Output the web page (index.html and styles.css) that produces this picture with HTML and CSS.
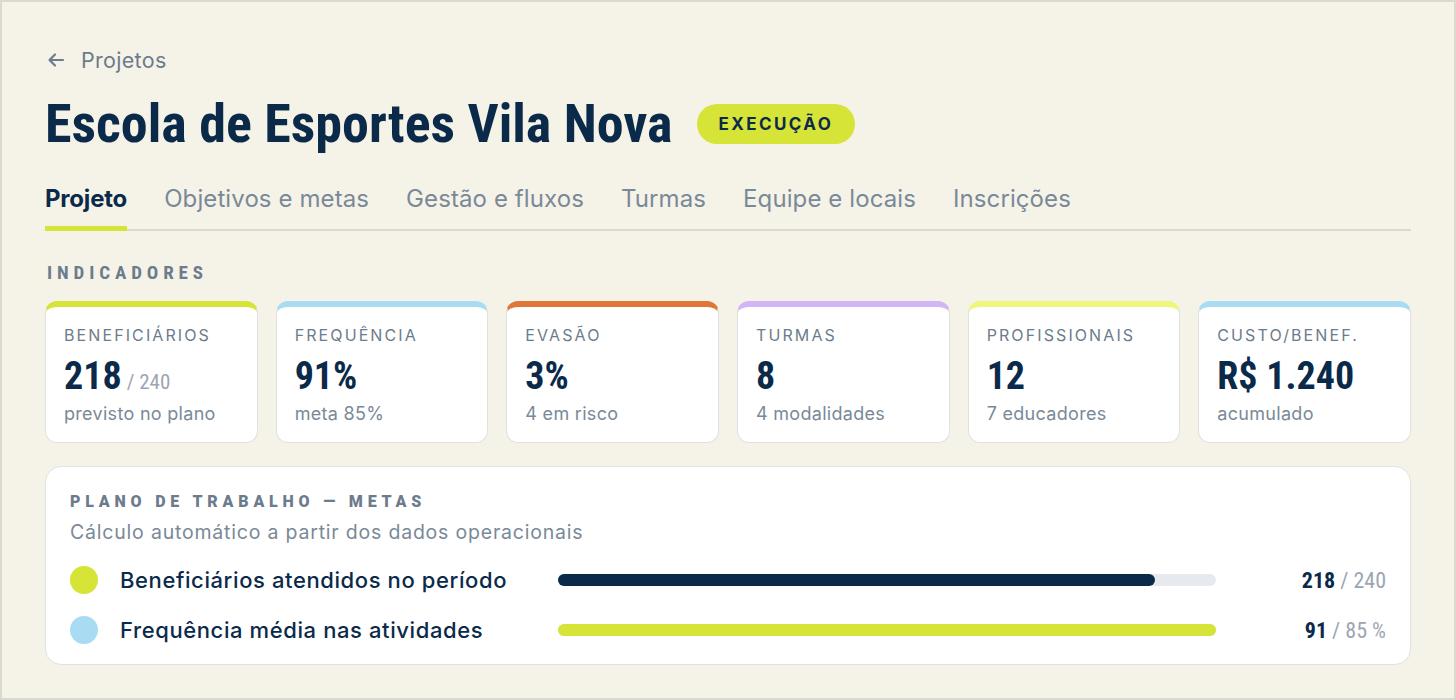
FILE: index.html
```html
<!DOCTYPE html>
<html lang="pt-BR">
<head>
    <meta charset="UTF-8">
    <meta name="viewport" content="width=device-width, initial-scale=1.0">
    <title>Escola de Esportes Vila Nova</title>
    <link rel="stylesheet" href="styles.css">
</head>
<body>
    <div class="page">
        <a class="back" href="#">
            <svg class="back-icon" viewBox="0 0 20 20" width="20" height="20" aria-hidden="true">
                <path d="M17 10H3.5M9 4.5 3.5 10 9 15.5" fill="none" stroke="currentColor" stroke-width="2.2" stroke-linecap="round" stroke-linejoin="round"/>
            </svg>
            <span>Projetos</span>
        </a>

        <div class="title-row">
            <h1>Escola de Esportes Vila Nova</h1>
            <span class="badge">EXECUÇÃO</span>
        </div>

        <nav class="tabs">
            <a class="tab active" href="#">Projeto</a>
            <a class="tab" href="#">Objetivos e metas</a>
            <a class="tab" href="#">Gestão e fluxos</a>
            <a class="tab" href="#">Turmas</a>
            <a class="tab" href="#">Equipe e locais</a>
            <a class="tab" href="#">Inscrições</a>
        </nav>

        <h2 class="section-title">INDICADORES</h2>

        <div class="cards">
            <div class="card lime">
                <div class="card-label">BENEFICIÁRIOS</div>
                <div class="card-value">218<span class="of">/ 240</span></div>
                <div class="card-sub">previsto no plano</div>
            </div>
            <div class="card sky">
                <div class="card-label">FREQUÊNCIA</div>
                <div class="card-value">91%</div>
                <div class="card-sub">meta 85%</div>
            </div>
            <div class="card orange">
                <div class="card-label">EVASÃO</div>
                <div class="card-value">3%</div>
                <div class="card-sub">4 em risco</div>
            </div>
            <div class="card lilac">
                <div class="card-label">TURMAS</div>
                <div class="card-value">8</div>
                <div class="card-sub">4 modalidades</div>
            </div>
            <div class="card yellow">
                <div class="card-label">PROFISSIONAIS</div>
                <div class="card-value">12</div>
                <div class="card-sub">7 educadores</div>
            </div>
            <div class="card sky">
                <div class="card-label">CUSTO/BENEF.</div>
                <div class="card-value">R$ 1.240</div>
                <div class="card-sub">acumulado</div>
            </div>
        </div>

        <div class="plan">
            <h3 class="plan-title">PLANO DE TRABALHO — METAS</h3>
            <p class="plan-sub">Cálculo automático a partir dos dados operacionais</p>

            <div class="goal">
                <span class="dot lime-dot"></span>
                <span class="goal-label">Beneficiários atendidos no período</span>
                <div class="track"><div class="fill navy-fill" style="width: 90.8%"></div></div>
                <span class="goal-value"><b>218</b> / 240</span>
            </div>
            <div class="goal">
                <span class="dot sky-dot"></span>
                <span class="goal-label">Frequência média nas atividades</span>
                <div class="track"><div class="fill lime-fill" style="width: 100%"></div></div>
                <span class="goal-value"><b>91</b> / 85 %</span>
            </div>
        </div>
    </div>
</body>
</html>
```

FILE: styles.css
```css
/* Page frame */
body {
    margin: 0;
    font-family: Inter, "Noto Sans", sans-serif;
    background-color: #f5f3e8;
    color: #0b2a4a;
}
.page {
    box-sizing: border-box;
    height: 700px;
    border: 2px solid #d9d8d1;
    padding: 45px 43px 0;
    background-color: #f5f3e8;
}

/* Header */
.back {
    display: flex;
    align-items: center;
    gap: 15px;
    width: max-content;
    color: #6c7c8c;
    text-decoration: none;
    font-size: 21.5px;
    line-height: 26px;
    letter-spacing: 0.3px;
}
.back-icon {
    margin-left: 1px;
}
.title-row {
    display: flex;
    align-items: center;
    gap: 24px;
    margin-top: 21px;
}
h1 {
    margin: 0;
    font-family: "Roboto Condensed", "Liberation Sans Narrow", Roboto, sans-serif;
    font-weight: 700;
    font-size: 54px;
    line-height: 60px;
    color: #0b2a4a;
}
.badge {
    display: inline-flex;
    align-items: center;
    height: 40px;
    padding: 0 22px;
    border-radius: 20px;
    background-color: #d6e337;
    color: #0b2a4a;
    font-size: 17px;
    font-weight: 700;
    letter-spacing: 2.4px;
}

/* Tabs */
.tabs {
    display: flex;
    gap: 37px;
    margin-top: 30px;
    border-bottom: 2px solid #d9d8d1;
}
.tab {
    padding-top: 1px;
    padding-bottom: 13px;
    border-bottom: 5px solid transparent;
    margin-bottom: -2px;
    color: #7a8998;
    text-decoration: none;
    font-size: 24px;
    line-height: 28px;
    letter-spacing: 0.1px;
}
.tab.active {
    border-bottom-color: #d6e337;
    color: #0b2a4a;
    font-weight: 700;
    letter-spacing: -0.2px;
}

/* Indicators */
.section-title {
    margin: 31px 0 0 2px;
    font-family: "Roboto Condensed", "Liberation Sans Narrow", Roboto, sans-serif;
    font-size: 19px;
    line-height: 22px;
    font-weight: 700;
    letter-spacing: 4.9px;
    color: #6c7c8c;
}
.cards {
    display: grid;
    grid-template-columns: repeat(6, 1fr);
    gap: 18px;
    margin-top: 17px;
}
.card {
    padding: 17px 18px 17px;
    background-color: #fff;
    border: 1.5px solid #dfe1e3;
    border-top: 6px solid #dfe1e3;
    border-radius: 12px;
}
.card.lime { border-top-color: #d6e337; }
.card.sky { border-top-color: #a9dcf3; }
.card.orange { border-top-color: #e07638; }
.card.lilac { border-top-color: #d2b5f7; }
.card.yellow { border-top-color: #eef67c; }
.card-label {
    font-size: 16px;
    line-height: 22px;
    letter-spacing: 2.1px;
    color: #6c7c8c;
}
.card-value {
    margin-top: 10px;
    font-family: "Roboto Condensed", "Liberation Sans Narrow", Roboto, sans-serif;
    font-weight: 700;
    font-size: 38px;
    line-height: 40px;
    color: #0b2a4a;
}
.card-value .of {
    margin-left: 5px;
    font-size: 21px;
    line-height: 1;
    font-weight: 400;
    color: #9ba6b2;
}
.card-sub {
    margin-top: 7px;
    font-size: 18px;
    line-height: 22px;
    letter-spacing: 0.3px;
    color: #7a8998;
}

/* Work plan */
.plan {
    margin-top: 23px;
    padding: 24px 24px 16px;
    background-color: #fff;
    border: 1.5px solid #dfe1e3;
    border-radius: 16px;
}
.plan-title {
    margin: 0;
    font-family: Roboto, "Liberation Sans", sans-serif;
    font-size: 16px;
    line-height: 22px;
    font-weight: 900;
    letter-spacing: 4.8px;
    color: #6c7c8c;
}
.plan-sub {
    margin: 7px 0 18px;
    font-size: 19.5px;
    line-height: 24px;
    letter-spacing: 0.8px;
    color: #7a8998;
}
.goal {
    display: grid;
    grid-template-columns: 28px 416px 658px 1fr;
    align-items: center;
    column-gap: 22px;
    height: 36px;
}
.goal + .goal {
    margin-top: 14px;
}
.dot {
    width: 28px;
    height: 28px;
    border-radius: 50%;
}
.lime-dot { background-color: #d6e337; }
.sky-dot { background-color: #a9dcf3; }
.goal-label {
    font-size: 22px;
    font-weight: 500;
    letter-spacing: 0.6px;
    color: #0b2a4a;
}
.track {
    height: 12px;
    border-radius: 6px;
    background-color: #e6e9ed;
}
.fill {
    height: 100%;
    border-radius: 6px;
}
.navy-fill { background-color: #0b2a4a; }
.lime-fill { background-color: #d6e337; }
.goal-value {
    text-align: right;
    font-family: "Roboto Condensed", "Liberation Sans Narrow", Roboto, sans-serif;
    font-size: 22px;
    color: #9ba6b2;
}
.goal-value b {
    color: #0b2a4a;
}
```
